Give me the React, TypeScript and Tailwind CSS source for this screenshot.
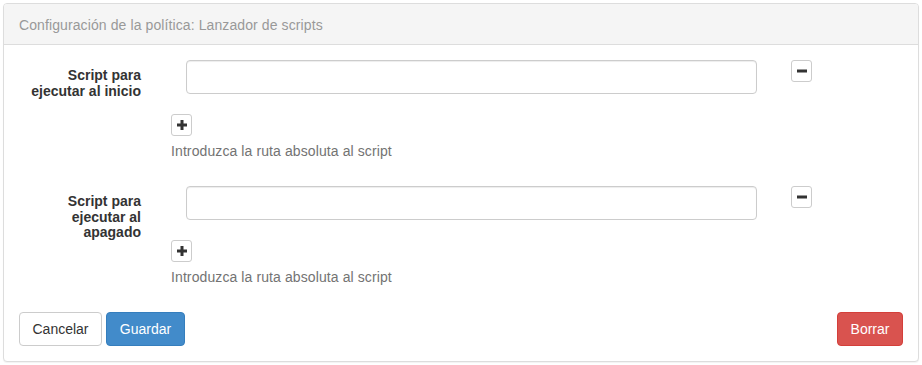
import React from 'react';

const PlusIcon: React.FC = () => (
  <svg width="10" height="10" viewBox="0 0 10 10">
    <rect x="0" y="3.5" width="10" height="3" fill="#333" />
    <rect x="3.5" y="0" width="3" height="10" fill="#333" />
  </svg>
);

const MinusIcon: React.FC = () => (
  <svg width="10" height="10" viewBox="0 0 10 10">
    <rect x="0" y="3.5" width="10" height="3" fill="#333" />
  </svg>
);

interface ScriptFieldProps {
  label: React.ReactNode;
}

const ScriptField: React.FC<ScriptFieldProps> = ({ label }) => (
  <div className="flex">
    <label className="w-[122px] shrink-0 pt-[8px] text-right text-[14px] font-bold leading-[15.5px] text-[#333]">
      {label}
    </label>
    <div className="ml-[30px] flex-1">
      <div className="flex items-start">
        <input
          type="text"
          className="ml-[15px] h-[34px] w-[571px] rounded-[4px] border border-[#ccc] bg-white px-3 text-[14px] shadow-[inset_0_1px_1px_rgba(0,0,0,0.075)] outline-none"
        />
        <button className="ml-[34px] flex h-[22px] w-[21px] items-center justify-center rounded-[3px] border border-[#ccc] bg-white">
          <MinusIcon />
        </button>
      </div>
      <button className="mt-[20px] flex h-[22px] w-[21px] items-center justify-center rounded-[3px] border border-[#ccc] bg-white">
        <PlusIcon />
      </button>
      <p className="mt-[5px] mb-[10px] text-[14px] leading-[20px] tracking-[0.1px] text-[#737373]">
        Introduzca la ruta absoluta al script
      </p>
    </div>
  </div>
);

const App: React.FC = () => {
  return (
    <div className="h-[365px] w-[922px] bg-white p-[3px] font-['Liberation_Sans',Arial,sans-serif]">
      <div className="rounded-[4px] border border-[#ddd] bg-white shadow-[0_1px_1px_rgba(0,0,0,0.05)]">
        {/* Header */}
        <div className="h-[41px] rounded-t-[3px] border-b border-[#ddd] bg-[#f5f5f5] px-[15px] pt-[11px] text-[14px] leading-[20px] tracking-[0.1px] text-[#999]">
          Configuración de la política: Lanzador de scripts
        </div>

        {/* Body */}
        <div className="p-[15px]">
          <div className="mb-[15px]">
            <ScriptField label={<>Script para<br />ejecutar al inicio</>} />
          </div>
          <div className="mb-[15px]">
            <ScriptField label={<>Script para<br />ejecutar al<br />apagado</>} />
          </div>

          <div className="flex items-center justify-between">
            <div className="flex gap-[4px]">
              <button className="h-[34px] w-[83px] rounded-[4px] border border-[#ccc] bg-white text-[14px] text-[#333]">
                Cancelar
              </button>
              <button className="h-[34px] w-[79px] rounded-[4px] border border-[#357ebd] bg-[#428bca] text-[14px] text-white">
                Guardar
              </button>
            </div>
            <button className="h-[34px] w-[66px] rounded-[4px] border border-[#d43f3a] bg-[#d9534f] text-[14px] text-white">
              Borrar
            </button>
          </div>
        </div>
      </div>
    </div>
  );
};

export default App;
